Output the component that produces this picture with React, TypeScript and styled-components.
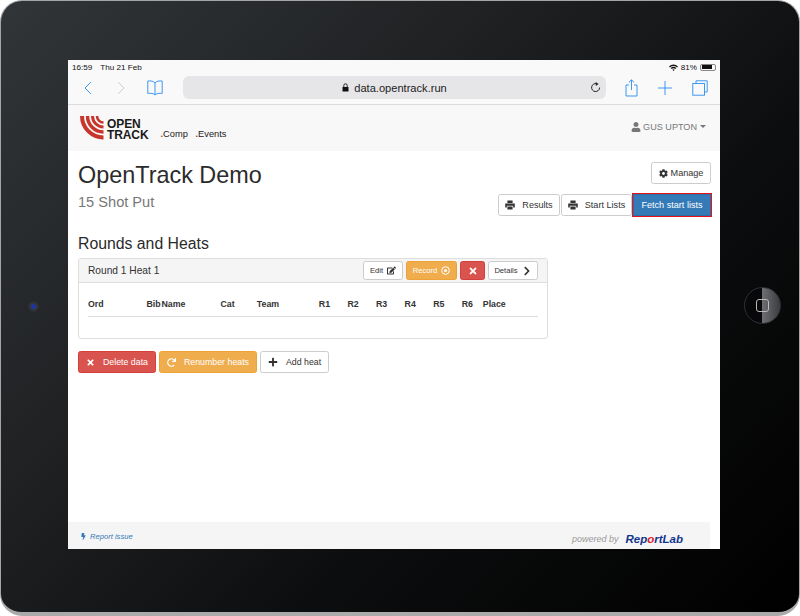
import React from 'react';
import styled, { createGlobalStyle } from 'styled-components';
import { FaBolt, FaChevronRight, FaCog, FaEdit, FaPlus, FaRedo, FaTimes, FaUser } from 'react-icons/fa';

const GlobalStyle = createGlobalStyle`
  html, body {
    margin: 0;
    padding: 0;
    background: #fff;
  }
  body {
    font-family: "Liberation Sans", Arial, sans-serif;
    color: #333;
  }
`;

const Tablet = styled.div`
  width: 800px;
  height: 616px;
  box-sizing: border-box;
  padding: 59px 79px 0 67px;
  border-radius: 22px;
  border: 1px solid #a5a5a5;
  border-bottom: 4px solid #aaa;
  background: linear-gradient(135deg, #323538 0%, #1f2123 35%, #0c0d0e 65%, #000 100%);
  display: flex;
  position: relative;
  overflow: hidden;
`;

const Camera = styled.div`
  position: absolute;
  left: 27px;
  top: 300px;
  width: 11px;
  height: 11px;
  border-radius: 50%;
  background: radial-gradient(circle, #1c34a8 0 18%, #33373c 42%, #1e2023 100%);
`;

const HomeButton = styled.div`
  position: absolute;
  left: 743px;
  top: 286px;
  width: 35px;
  height: 35px;
  border-radius: 50%;
  background: linear-gradient(90deg, #08080a 0 50%, #6c6e72 50%, #3a3c40 100%);
  border: 1px solid #2f3033;
  display: flex;
  align-items: center;
  justify-content: center;
`;

const HomeSquare = styled.div`
  width: 11px;
  height: 11px;
  border: 1px solid #bbb;
  border-radius: 3px;
`;

const Screen = styled.div`
  width: 652px;
  height: 489px;
  background: #fff;
  display: flex;
  flex-direction: column;
  overflow: hidden;
`;

const StatusBar = styled.div`
  height: 14px;
  flex-shrink: 0;
  background: #f9f9f9;
  display: flex;
  align-items: center;
  justify-content: space-between;
  padding: 0 3px 0 4px;
  font-size: 8.1px;
  color: #111;
`;

const StatusGroup = styled.div<{ $gap: number }>`
  display: flex;
  align-items: center;
  gap: ${({ $gap }) => $gap}px;
`;

const Toolbar = styled.div`
  height: 31px;
  flex-shrink: 0;
  box-sizing: border-box;
  background: #f9f9f9;
  border-bottom: 1px solid #dcdcdc;
  display: flex;
  align-items: center;
  padding: 0 12px 3px 16px;
`;

const ToolIcons = styled.div<{ $gap: number }>`
  display: flex;
  align-items: center;
  gap: ${({ $gap }) => $gap}px;
`;

const AddressBar = styled.div`
  width: 423px;
  height: 23px;
  margin: 0 19px 0 20px;
  background: #e6e6e8;
  border-radius: 6px;
  display: flex;
  align-items: center;
  justify-content: center;
  position: relative;
  font-size: 11.1px;
  color: #222;
  gap: 5px;
`;

const Reload = styled.svg`
  position: absolute;
  right: 5px;
  top: 6px;
`;

const Navbar = styled.div`
  height: 46px;
  flex-shrink: 0;
  box-sizing: border-box;
  background: #f8f8f8;
  display: flex;
  align-items: center;
  justify-content: space-between;
  padding: 0 14px 0 12px;
`;

const Brand = styled.div`
  display: flex;
  align-items: center;
`;

const LogoWords = styled.div`
  font-weight: 700;
  font-size: 12px;
  line-height: 11px;
  color: #1a1a1a;
  margin: 3px 0 0 3px;
  letter-spacing: -0.1px;
`;

const NavLinks = styled.div`
  display: flex;
  margin-left: 12px;
`;

const NavLink = styled.span`
  font-size: 9.3px;
  color: #222;
  margin-top: 12px;
  width: 35px;

  b {
    color: #b8381c;
  }
`;

const UserMenu = styled.div`
  display: flex;
  align-items: center;
  gap: 2px;
  margin-bottom: 3px;
  font-size: 9.1px;
  color: #777;
`;

const Caret = styled.span`
  display: inline-block;
  margin-left: 1px;
  border-top: 3px solid #777;
  border-left: 3px solid transparent;
  border-right: 3px solid transparent;
`;

const Content = styled.div`
  flex: 1;
  padding: 11px 9px 0 10px;
  display: flex;
  flex-direction: column;
`;

const Header = styled.div`
  display: flex;
  justify-content: space-between;
`;

const Title = styled.h1`
  margin: 0;
  font-size: 23.4px;
  line-height: 27px;
  font-weight: 400;
  color: #2b2b2b;
`;

const Subtitle = styled.div`
  margin-top: 4px;
  font-size: 14.6px;
  line-height: 18px;
  color: #777;
`;

const HeaderActions = styled.div`
  display: flex;
  flex-direction: column;
  align-items: flex-end;
  gap: 10px;
`;

const ButtonRow = styled.div<{ $gap: number }>`
  display: flex;
  gap: ${({ $gap }) => $gap}px;
`;

const tones = {
  plain: { bg: '#fff', border: '#ccc', color: '#333' },
  danger: { bg: '#d9534f', border: '#d43f3a', color: '#fff' },
  warning: { bg: '#f0ad4e', border: '#eea236', color: '#fff' },
  primary: { bg: '#337ab7', border: '#2e6da4', color: '#fff' },
};

type Tone = keyof typeof tones;

type ButtonProps = { $tone?: Tone; $w: number; $h?: number; $gap?: number; $font?: number };

const Button = styled.div<ButtonProps>`
  box-sizing: border-box;
  width: ${({ $w }) => $w}px;
  height: ${({ $h = 22 }) => $h}px;
  display: flex;
  align-items: center;
  justify-content: center;
  gap: ${({ $gap = 7 }) => $gap}px;
  font-size: ${({ $font = 9.1 }) => $font}px;
  border-radius: 2.5px;
  background: ${({ $tone = 'plain' }) => tones[$tone].bg};
  border: 1px solid ${({ $tone = 'plain' }) => tones[$tone].border};
  color: ${({ $tone = 'plain' }) => tones[$tone].color};
`;

const FetchButton = styled(Button)`
  border-radius: 0;
  outline: 1.5px solid #e8121f;
`;

const SectionTitle = styled.h3`
  margin: 18px 0 4px 0;
  font-size: 15.8px;
  line-height: 20px;
  font-weight: 400;
  color: #2b2b2b;
`;

const Panel = styled.div`
  width: 470px;
  height: 81px;
  box-sizing: border-box;
  border: 1px solid #ddd;
  border-radius: 3px;
  overflow: hidden;
`;

const PanelHeading = styled.div`
  height: 24px;
  box-sizing: border-box;
  background: #f5f5f5;
  border-bottom: 1px solid #ddd;
  padding: 0 9px 0 9px;
  display: flex;
  align-items: center;
  justify-content: space-between;
  font-size: 10.2px;
  color: #333;
`;

const HeatTable = styled.div`
  margin: 14px 9px 0 9px;
  height: 19px;
  border-bottom: 1.5px solid #ddd;
  display: grid;
  grid-template-columns: 58.5px 15px 59px 36.3px 62px 28.6px 28.6px 28.6px 28.6px 28.6px 21px 1fr;
  font-size: 8.8px;
  font-weight: 700;
  line-height: 14px;
  color: #333;
`;

const PageActions = styled.div`
  display: flex;
  gap: 3px;
  margin-top: 12px;
`;

const Footer = styled.div`
  height: 27px;
  flex-shrink: 0;
  box-sizing: border-box;
  width: 642px;
  background: #f5f5f5;
  display: flex;
  justify-content: space-between;
  padding: 10px 27px 0 12px;
`;

const ReportIssue = styled.div`
  display: flex;
  align-items: center;
  gap: 3px;
  height: 9px;
  font-size: 7.6px;
  font-style: italic;
  color: #337ab7;
`;

const Powered = styled.div`
  display: flex;
  align-items: center;
  gap: 7px;
  height: 14px;
  font-size: 9px;
  font-style: italic;
  color: #999;
`;

const ReportLab = styled.span`
  font-size: 11.5px;
  font-weight: 700;
  color: #12358f;

  b {
    color: #e1202a;
  }
`;

const Battery = styled.div`
  width: 16px;
  height: 7px;
  box-sizing: border-box;
  border: 1px solid #888;
  border-radius: 2px;
  padding: 0.5px;
  margin-right: 1px;
`;

const BatteryFill = styled.div`
  width: 81%;
  height: 100%;
  background: #111;
`;

const BookSvg = styled.svg`
  margin-left: -3px;
`;

const Logo = () => (
  <svg width="24" height="24" viewBox="0 0 24 24">
    <g fill="none" stroke="#c8352a">
      <path d="M2 0 A 21.5 21.5 0 0 0 23.5 21.5" strokeWidth="4" />
      <path d="M7.5 0 A 16 16 0 0 0 23.5 16" strokeWidth="3.4" />
      <path d="M12.5 0 A 11 11 0 0 0 23.5 11" strokeWidth="3" />
      <path d="M17 0 A 6.5 6.5 0 0 0 23.5 6.5" strokeWidth="2.6" />
    </g>
  </svg>
);

const BackIcon = () => (
  <svg width="8" height="14" viewBox="0 0 8 14" fill="none" stroke="#3f97f2" strokeWidth="1">
    <path d="M7 1 L1 7 L7 13" />
  </svg>
);

const ForwardIcon = () => (
  <svg width="8" height="14" viewBox="0 0 8 14" fill="none" stroke="#cfcfd2" strokeWidth="1">
    <path d="M1 1 L7 7 L1 13" />
  </svg>
);

const BookIcon = () => (
  <BookSvg width="16" height="16" viewBox="0 0 16 16" fill="none" stroke="#3f97f2" strokeWidth="1">
    <path d="M8 3 C6.8 1.2 3.4 0.6 0.8 1 V13.4 C3.4 13 6.8 13.4 8 15 C9.2 13.4 12.6 13 15.2 13.4 V1 C12.6 0.6 9.2 1.2 8 3 V15" />
  </BookSvg>
);

const ShareIcon = () => (
  <svg width="13" height="18" viewBox="0 0 13 18" fill="none" stroke="#3f97f2" strokeWidth="1">
    <path d="M4 6 H1 V17 H12 V6 H9 M6.5 11 V1 M3.8 3.4 L6.5 0.8 L9.2 3.4" />
  </svg>
);

const PlusIcon = () => (
  <svg width="14" height="14" viewBox="0 0 14 14" fill="none" stroke="#3f97f2" strokeWidth="1">
    <path d="M7 0 V14 M0 7 H14" />
  </svg>
);

const TabsIcon = () => (
  <svg width="16" height="16" viewBox="0 0 16 16" fill="none" stroke="#3f97f2" strokeWidth="1">
    <path d="M4 3.5 V0.8 H15.2 V12 H12.5" />
    <rect x="0.8" y="3.5" width="11.7" height="11.7" />
  </svg>
);

const LockIcon = () => (
  <svg width="7" height="9" viewBox="0 0 7 9">
    <path d="M0.5 4 H6.5 V8.6 H0.5 Z" fill="#111" />
    <path d="M1.8 4 V2.5 A1.7 1.7 0 0 1 5.2 2.5 V4" fill="none" stroke="#111" strokeWidth="0.9" />
  </svg>
);

const WifiIcon = () => (
  <svg width="9" height="7" viewBox="0 0 9 7" fill="#111">
    <path d="M0 2.4 A6.4 6.4 0 0 1 9 2.4 L8 3.4 A5 5 0 0 0 1 3.4 Z M1.7 4.1 A4 4 0 0 1 7.3 4.1 L6.3 5.1 A2.6 2.6 0 0 0 2.7 5.1 Z M3.4 5.8 A1.6 1.6 0 0 1 5.6 5.8 L4.5 7 Z" />
  </svg>
);

const RecordIcon = () => (
  <svg width="9" height="9" viewBox="0 0 9 9" fill="none" stroke="#fff">
    <circle cx="4.5" cy="4.5" r="3.8" />
    <circle cx="4.5" cy="4.5" r="1.5" fill="#fff" stroke="none" />
  </svg>
);

// glyphicon-print shape: paper on top, solid body, paper tray below
const PrintIcon = () => (
  <svg width="10" height="10" viewBox="0 0 10 10" fill="#333">
    <path d="M2.4 0.4 H7.6 V3 H2.4 Z" />
    <path d="M0.2 3.6 H9.8 V7.4 H8.2 V5.8 H1.8 V7.4 H0.2 Z" />
    <path d="M2.4 6.4 H7.6 V9.6 H2.4 Z" />
  </svg>
);

export default function App() {
  return (
    <>
      <GlobalStyle />
      <Tablet>
        <Camera />
        <HomeButton>
          <HomeSquare />
        </HomeButton>
        <Screen>
          <StatusBar>
            <StatusGroup $gap={8}>
              <span>16:59</span>
              <span>Thu 21 Feb</span>
            </StatusGroup>
            <StatusGroup $gap={3}>
              <WifiIcon />
              <span>81%</span>
              <Battery>
                <BatteryFill />
              </Battery>
            </StatusGroup>
          </StatusBar>
          <Toolbar>
            <ToolIcons $gap={25}>
              <BackIcon />
              <ForwardIcon />
              <BookIcon />
            </ToolIcons>
            <AddressBar>
              <LockIcon />
              data.opentrack.run
              <Reload width="11" height="11" viewBox="0 0 11 11" fill="none" stroke="#222" strokeWidth="1">
                <path d="M7 1.8 A4 4 0 1 0 9.6 5.5" />
                <path d="M5.6 0 L8.6 2 L5.8 4 Z" fill="#222" stroke="none" />
              </Reload>
            </AddressBar>
            <ToolIcons $gap={20}>
              <ShareIcon />
              <PlusIcon />
              <TabsIcon />
            </ToolIcons>
          </Toolbar>
          <Navbar>
            <Brand>
              <Logo />
              <LogoWords>
                <div>OPEN</div>
                <div>TRACK</div>
              </LogoWords>
              <NavLinks>
                <NavLink><b>.</b>Comp</NavLink>
                <NavLink><b>.</b>Events</NavLink>
              </NavLinks>
            </Brand>
            <UserMenu>
              <FaUser size={10} />
              GUS UPTON
              <Caret />
            </UserMenu>
          </Navbar>
          <Content>
            <Header>
              <div>
                <Title>OpenTrack Demo</Title>
                <Subtitle>15 Shot Put</Subtitle>
              </div>
              <HeaderActions>
                <Button $w={60} $gap={3}><FaCog size={9} />Manage</Button>
                <ButtonRow $gap={1}>
                  <Button $w={62}><PrintIcon />Results</Button>
                  <Button $w={71}><PrintIcon />Start Lists</Button>
                  <FetchButton $w={78} $tone="primary">Fetch start lists</FetchButton>
                </ButtonRow>
              </HeaderActions>
            </Header>
            <SectionTitle>Rounds and Heats</SectionTitle>
            <Panel>
              <PanelHeading>
                Round 1 Heat 1
                <ButtonRow $gap={3}>
                  <Button $w={40} $h={19} $gap={4} $font={7.6}>Edit<FaEdit size={9} /></Button>
                  <Button $w={51} $h={19} $gap={4} $font={7.6} $tone="warning">Record<RecordIcon /></Button>
                  <Button $w={25} $h={19} $tone="danger"><FaTimes size={10} /></Button>
                  <Button $w={50} $h={19} $gap={4} $font={7.6}>Details<FaChevronRight size={10} /></Button>
                </ButtonRow>
              </PanelHeading>
              <HeatTable>
                <span>Ord</span>
                <span>Bib</span>
                <span>Name</span>
                <span>Cat</span>
                <span>Team</span>
                <span>R1</span>
                <span>R2</span>
                <span>R3</span>
                <span>R4</span>
                <span>R5</span>
                <span>R6</span>
                <span>Place</span>
              </HeatTable>
            </Panel>
            <PageActions>
              <Button $w={78} $gap={8} $font={8.8} $tone="danger"><FaTimes size={9} />Delete data</Button>
              <Button $w={98} $gap={8} $font={8.8} $tone="warning"><FaRedo size={9} />Renumber heats</Button>
              <Button $w={69} $gap={8} $font={8.8}><FaPlus size={10} />Add heat</Button>
            </PageActions>
          </Content>
          <Footer>
            <ReportIssue><FaBolt size={7} />Report issue</ReportIssue>
            <Powered>
              powered by
              <ReportLab>Rep<b>o</b>rtLab</ReportLab>
            </Powered>
          </Footer>
        </Screen>
      </Tablet>
    </>
  );
}
